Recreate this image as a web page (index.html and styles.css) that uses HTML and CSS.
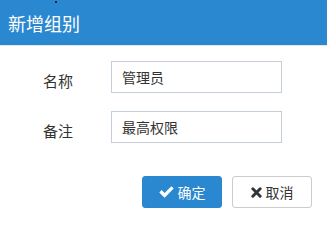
FILE: index.html
```html
<!DOCTYPE html>
<html lang="zh">
<head>
<meta charset="utf-8">
<link rel="stylesheet" href="styles.css">
</head>
<body>
<div class="dialog">
  <div class="header">
    <span class="title">新增组别</span>
    <span class="dot"></span>
  </div>
  <div class="form">
    <div class="row">
      <label class="label">名称</label>
      <div class="input">管理员</div>
    </div>
    <div class="row">
      <label class="label">备注</label>
      <div class="input">最高权限</div>
    </div>
    <div class="actions">
      <button class="btn btn-primary">
        <svg class="icon" viewBox="0 0 15 12" width="15" height="12"><path d="M0.3 6.4 L2.6 4.1 L5.6 7.1 L12.4 0.3 L14.7 2.6 L5.6 11.7 Z" fill="#fff"/></svg>
        <span>确定</span>
      </button>
      <button class="btn btn-default">
        <svg class="icon" viewBox="0 0 12 12" width="11" height="11"><path d="M2 2 L10 10 M10 2 L2 10" fill="none" stroke="#333" stroke-width="3.2" stroke-linecap="round"/></svg>
        <span>取消</span>
      </button>
    </div>
  </div>
</div>
</body>
</html>
```

FILE: styles.css
```css
html, body {
  margin: 0;
  padding: 0;
  background: #fff;
  font-family: "Noto Sans CJK SC", "Noto Sans", sans-serif;
}
.dialog {
  width: 327px;
  height: 226px;
  overflow: hidden;
}
.header {
  position: relative;
  height: 45px;
  background: #2a88d0;
  border-bottom: 1px solid #e6e6e6;
  display: flex;
  align-items: center;
  padding-left: 8px;
}
.title {
  color: #fff;
  font-size: 18px;
  line-height: 20px;
  padding-top: 1px;
}
.dot {
  position: absolute;
  left: 55px;
  top: 1px;
  width: 2px;
  height: 2px;
  background: #1a2a40;
}
.form {
  padding: 15px 0 0 43px;
  display: flex;
  flex-direction: column;
  gap: 18px;
}
.row {
  display: flex;
  align-items: center;
  height: 32px;
}
.label {
  width: 68px;
  font-size: 15px;
  color: #333;
  padding-top: 6px;
}
.input {
  box-sizing: border-box;
  width: 171px;
  height: 32px;
  border: 1px solid #c4ced9;
  padding-left: 10px;
  font-size: 14px;
  line-height: 30px;
  color: #333;
}
.actions {
  display: flex;
  justify-content: flex-end;
  gap: 10px;
  margin-top: 15px;
  padding-right: 15px;
}
.btn {
  box-sizing: border-box;
  width: 80px;
  height: 32px;
  border-radius: 3px;
  font-family: inherit;
  font-size: 14px;
  display: flex;
  align-items: center;
  justify-content: center;
  gap: 4px;
  padding: 0;
}
.btn-primary {
  background: #2a88d0;
  border: 1px solid #2a88d0;
  color: #fff;
}
.btn-default {
  background: #fff;
  border: 1px solid #cccccc;
  color: #333;
}
.icon {
  display: block;
}
```
